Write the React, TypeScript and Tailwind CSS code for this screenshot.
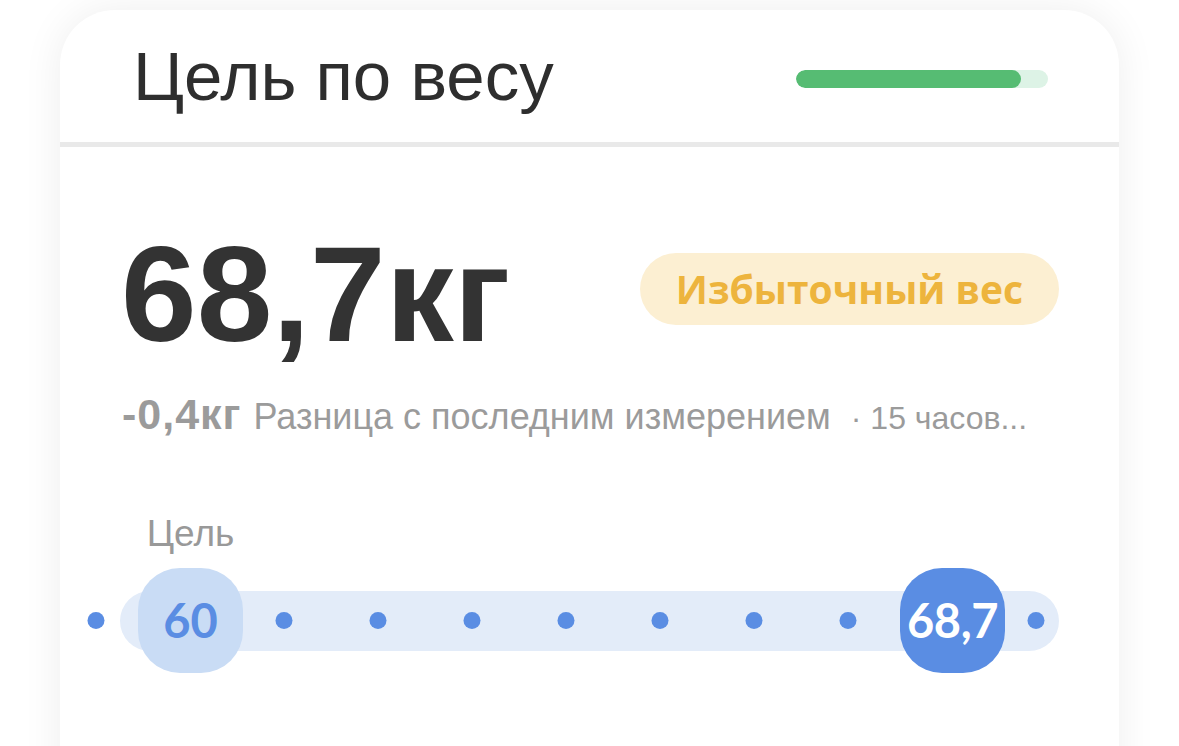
const sans = { fontFamily: '"Liberation Sans", Arial, sans-serif' };

const DOTS = Array.from({ length: 11 }, (_, i) => -24 + i * 94);

const GoalSlider = () => {
    return (
        <div className="relative h-[105px] pt-[23px]">
            {/* Track */}
            <div className="h-[60px] rounded-full bg-[#e3ecf9]" />

            {/* Dots */}
            {DOTS.map((x, i) => (
                <span
                    key={i}
                    className="absolute top-[44px] h-[17px] w-[17px] -translate-x-1/2 rounded-full bg-[#5a8de3]"
                    style={{ left: x }}
                />
            ))}

            {/* Goal bubble */}
            <div className="absolute left-[18px] top-0 flex h-[105px] w-[105px] items-center justify-center rounded-[42px] bg-[#c9dcf5] font-['Lato',sans-serif] text-[47px] font-bold text-[#5a8de3]">
                60
            </div>

            {/* Current bubble */}
            <div className="absolute left-[780px] top-0 flex h-[105px] w-[105px] items-center justify-center rounded-[42px] bg-[#5a8de3] font-['Lato',sans-serif] text-[47px] font-bold tracking-[-0.5px] text-white">
                68,7
            </div>
        </div>
    );
};

export default function App() {
    return (
        <div className="min-h-[746px] overflow-hidden bg-white pt-[10px]">
            <div
                className="mx-[60px] min-h-[800px] rounded-t-[55px] bg-white shadow-[0_0_40px_rgba(0,0,0,0.07)]"
                style={sans}
            >
                {/* Header */}
                <div className="flex h-[132px] items-center justify-between pl-[73px] pr-[71px]">
                    <h1 className="text-[69px] leading-none font-normal text-[#2e2e2e]">
                        Цель по весу
                    </h1>
                    <div className="mt-[6px] h-[18px] w-[252px] overflow-hidden rounded-full bg-[#ddf3e6]">
                        <div className="h-full w-[225px] rounded-full bg-[#56bc73]" />
                    </div>
                </div>

                <div className="h-[5px] bg-[#e9e9e9]" />

                {/* Body */}
                <div className="px-[60px] pt-[79px]">
                    <div className="flex h-[136px] items-center justify-between">
                        <div className="ml-[1px] text-[136px] leading-none font-bold text-[#333333]">
                            68,7кг
                        </div>
                        <div className="mb-[10px] flex h-[72px] w-[419px] items-center justify-center rounded-full bg-[#fcefd2] font-['Open_Sans',sans-serif] text-[39px] font-bold text-[#edb43d]">
                            Избыточный вес
                        </div>
                    </div>

                    <div className="mt-[32px] flex items-baseline whitespace-nowrap text-[#9b9b9b]">
                        <span className="ml-[2px] text-[43px] leading-[40px] font-bold tracking-[1px]">-0,4кг</span>
                        <span className="ml-[12px] text-[36px] leading-[40px]">
                            Разница с последним измерением
                        </span>
                        <span className="ml-[20px] text-[32px] leading-[40px]">· 15 часов...</span>
                    </div>

                    <div className="mt-[76px] ml-[18px] w-[105px] text-center text-[37px] leading-[40px] text-[#999999]">
                        Цель
                    </div>

                    <div className="mt-[14px]">
                        <GoalSlider />
                    </div>
                </div>
            </div>
        </div>
    );
}
